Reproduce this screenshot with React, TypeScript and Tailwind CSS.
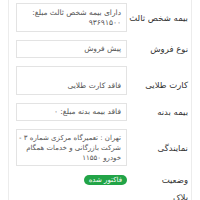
type Row = {
  label: string;
  lines?: string[];
  boxClass?: string;
  textClass?: string;
  badge?: string;
};

const ROWS: Row[] = [
  {
    label: "بیمه شخص ثالث",
    lines: ["دارای بیمه شخص ثالث مبلغ:", "۹۳۶۹۱۵۰۰"],
    boxClass: "h-[29px] justify-center",
  },
  { label: "نوع فروش", lines: ["پیش فروش"], boxClass: "h-[18px] justify-center" },
  { label: "کارت طلایی", lines: ["فاقد کارت طلایی"], boxClass: "h-[29px] justify-end pb-[3px]" },
  { label: "بیمه بدنه", lines: ["فاقد بیمه بدنه مبلغ: ۰"], boxClass: "h-[18px] justify-center" },
  {
    label: "نمایندگی",
    lines: ["تهران : تعمیرگاه مرکزی شماره ۳ -", "شرکت بازرگانی و خدمات همگام", "خودرو ۱۱۵۵۰"],
    boxClass: "h-[37px] justify-center",
    textClass: "text-[7px]",
  },
  { label: "وضعیت", badge: "فاکتور شده" },
  { label: "پلاک" },
];

export default function App() {
  return (
    <div
      dir="rtl"
      className="h-[200px] w-[200px] overflow-hidden bg-white font-['DejaVu_Sans',sans-serif]"
    >
      <div className="mx-[8px] flex h-full flex-col gap-[8px] border-x border-[#ececec] pt-[3px] pl-[7px]">
        {ROWS.map((row) => (
          <div
            key={row.label}
            className={`flex ${row.label === "کارت طلایی" ? "items-end" : "items-center"} ${row.label === "پلاک" ? "-mt-[3px]" : ""}`}
          >
            <div
              className={`w-[64px] shrink-0 whitespace-nowrap pr-[3px] text-[8.5px] leading-[12px] text-[#333] ${row.label === "کارت طلایی" ? "pb-[4px]" : ""}`}
            >
              {row.label}
            </div>
            {row.lines && (
              <div
                className={`flex w-[112px] flex-col border border-[#e3e3e3] pr-[5px] leading-[10px] text-[#555] ${row.textClass ?? "text-[7.5px]"} ${row.boxClass ?? ""}`}
              >
                {row.lines.map((l) => (
                  <span key={l} className="whitespace-nowrap">
                    {l}
                  </span>
                ))}
              </div>
            )}
            {row.badge && (
              <div className="flex w-[112px]">
                <span className="rounded-full bg-[#22a447] px-[5px] text-[7px] leading-[10px] text-white">
                  {row.badge}
                </span>
              </div>
            )}
            {!row.lines && !row.badge && <div className="h-[12px] w-[112px]" />}
          </div>
        ))}
      </div>
    </div>
  );
}
